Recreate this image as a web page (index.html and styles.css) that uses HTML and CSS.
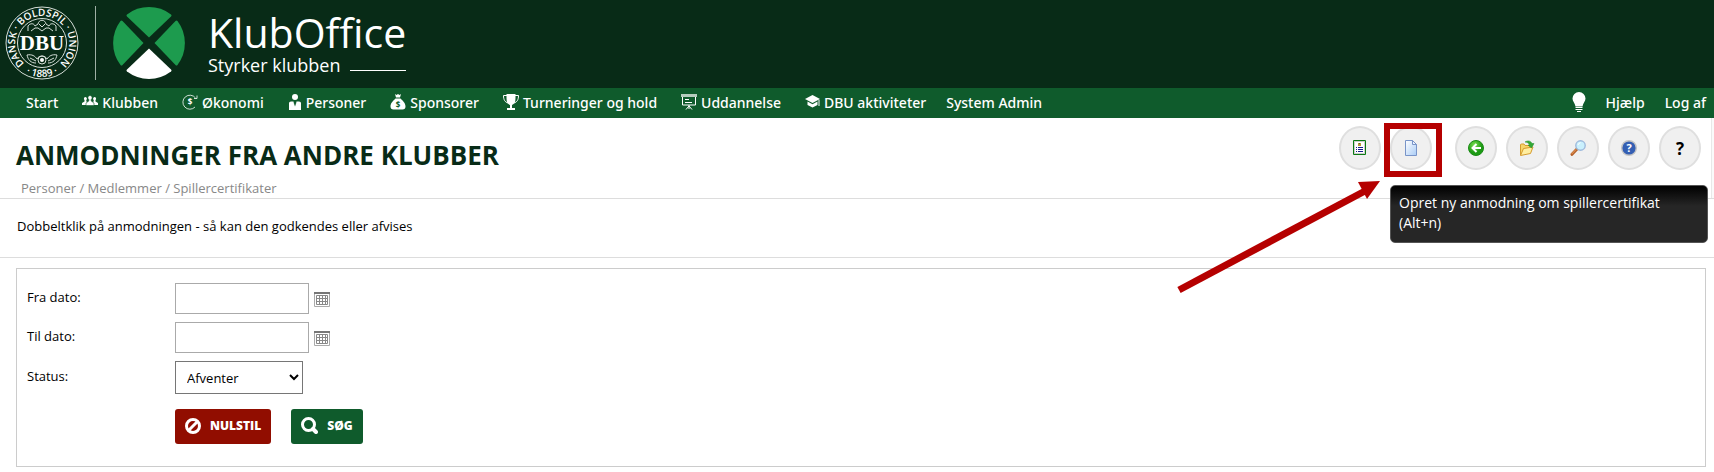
FILE: index.html
```html
<!DOCTYPE html>
<html lang="da">

<head>
  <meta charset="utf-8">
  <meta name="viewport" content="width=device-width, initial-scale=1">
  <title>KlubOffice - Anmodninger fra andre klubber</title>
  <link rel="stylesheet" href="styles.css">
</head>

<body>

<header class="top">
  <svg class="seal" width="74" height="74" viewBox="0 0 74 74" aria-label="DBU">
    <defs>
      <path id="ringTop" d="M37 64A27 27 0 1 1 37.100 64" />
      <path id="ringBottom" d="M3 37A34 34 0 0 0 71 37" />
    </defs>
    <circle cx="37" cy="37" r="36" class="line" />
    <circle cx="37" cy="37" r="24.500" class="line" />
    <text class="ringText"><textPath href="#ringTop" startOffset="50%" text-anchor="middle">DANSK · BOLDSPIL · UNION</textPath></text>
    <text class="ringText"><textPath href="#ringBottom" startOffset="50%" text-anchor="middle">· 1889 ·</textPath></text>
    <path class="line" d="M23 25v-5c2-3 6-3 7 0l3-2c1-5 7-5 8 0l3 2c1-3 5-3 7 0v5M26 25l4-3h3l4 3 4-3h3l4 3M34 18l3 3 3-3" />
    <path class="line" d="M22 49c5-1 8 1 10 4 2-4 8-4 10 0 2-3 5-5 10-4-1 5-4 8-9 8M22 49c1 5 4 8 9 8M25 52l6 3M49 52l-6 3" />
    <circle class="line" cx="37" cy="54" r="4" /><circle cx="37" cy="54" r="2" fill="#fff" />
    <text class="sealText" x="37" y="44" text-anchor="middle">DBU</text>
  </svg>
  <span class="rule"></span>
  <svg class="mark" width="74" height="74" viewBox="0 0 74 74" aria-hidden="true">
    <g fill="#1d9b4e">
      <path d="M37 31.500L15 10.500Q14 9.500 15 8.500A36.500 36.500 0 0 1 59 8.500Q60 9.500 59 10.500Z" />
      <path d="M31.500 37L10.500 59Q9.500 60 8.500 59A36.500 36.500 0 0 1 8.500 15Q9.500 14 10.500 15Z" />
      <path d="M42.500 37L63.500 59Q64.500 60 65.500 59A36.500 36.500 0 0 0 65.500 15Q64.500 14 63.500 15Z" />
    </g>
    <path fill="#fff" d="M37 42.500L15 63.500Q14 64.500 15 65.500A36.500 36.500 0 0 0 59 65.500Q60 64.500 59 63.500Z" />
  </svg>
  <div class="brand">
    <div class="brandName">KlubOffice</div>
    <div class="brandSlogan">Styrker klubben<span></span></div>
  </div>
</header>

<nav class="menu">
  <a href="#">Start</a>
  <a href="#"><svg width="16" height="16" viewBox="0 0 16 16"><path fill="currentColor" d="M3.500 3a1.700 1.700 0 0 1 .8 3v1.500L5.500 8v3H0V9l2.500-1.500V6a1.700 1.700 0 0 1 1-3zM12.500 3a1.700 1.700 0 0 0-.8 3v1.500L10.500 8v3H16V9l-2.500-1.500V6a1.700 1.700 0 0 0-1-3z" /><path fill="currentColor" stroke="#0f5b2c" stroke-width=".6" d="M8 1.500a2.200 2.200 0 0 1 1.200 4V7L12 9v2.500H4V9l2.800-2V5.500A2.200 2.200 0 0 1 8 1.500z" /></svg>Klubben</a>
  <a href="#"><svg width="16" height="16" viewBox="0 0 16 16"><path fill="none" stroke="currentColor" stroke-width=".8" d="M13 13A7 7 0 1 1 13.500 4M15 1.500v3h-3" /><text x="8" y="11" class="dollar">$</text></svg>Økonomi</a>
  <a href="#"><svg width="14" height="16" viewBox="0 0 14 16"><circle cx="7" cy="3" r="3" fill="currentColor" /><path fill="currentColor" d="M1 9q0-1.500 2-1.500h2.500l1 5L7 9l.5 3.500 1-5H11q2 0 2 1.500v7H1z" /></svg>Personer</a>
  <a href="#"><svg width="16" height="16" viewBox="0 0 16 16"><path fill="currentColor" d="M5 0l1.500 1L8 0l1.500 1L11 0l-1 3.500H6zM5.500 4.500h5C13 7 15.500 9 15.500 12.500q0 3-3 3h-9q-3 0-3-3C.5 9 3 7 5.500 4.500z" /><text x="8" y="13.500" class="dollar dark">$</text></svg>Sponsorer</a>
  <a href="#"><svg width="16" height="16" viewBox="0 0 16 16"><path fill="currentColor" d="M3.500 0h9v4c0 4-1 6-3.500 7v3h3v2H4v-2h3v-3C4.500 10 3.500 8 3.500 4z" /><path fill="none" stroke="currentColor" d="M4 1.500H.5C.5 6 2 8 5 9M12 1.500h3.500C15.500 6 14 8 11 9" /></svg>Turneringer og hold</a>
  <a href="#"><svg width="16" height="16" viewBox="0 0 16 16"><path fill="none" stroke="currentColor" d="M1.500 2v9h13V2M8 11v4M8 12l-3 3.500M8 12l3 3.500M4 5.500h4M4 8.500h7" /><path stroke="#b5ccbd" stroke-width="3" d="M0 1.500h16" /></svg>Uddannelse</a>
  <a href="#"><svg width="15" height="16" viewBox="0 0 15 16"><path fill="currentColor" d="M7.500 1l7.500 4-7.500 4L0 5zM2.500 7.500l5 2.700 5-2.700v3.500l-5 2.500-5-2.500zM13.500 6h1v6h-1z" /></svg>DBU aktiviteter</a>
  <a href="#">System Admin</a>
  <a href="#" class="bulb" aria-label="Tips"><svg width="14" height="20" viewBox="0 0 14 20"><path fill="currentColor" d="M7 0a6.500 6.500 0 0 1 6.500 6.500c0 3-2.500 4.500-3 8h-7c-.5-3.500-3-5-3-8A6.500 6.500 0 0 1 7 0z" /><path stroke="currentColor" d="M3.500 15.500h7M3.500 17.500h7M5 19.500h4" /></svg></a>
  <a href="#">Hjælp</a>
  <a href="#">Log af</a>
</nav>

<main>
  <section class="pageHead">
    <div>
      <h1>ANMODNINGER FRA ANDRE KLUBBER</h1>
      <p class="crumbs">Personer / Medlemmer / Spillercertifikater</p>
    </div>
    <div class="tools">
      <button type="button" aria-label="Liste"><svg width="14" height="16" viewBox="0 0 14 16"><path fill="#fff" stroke="#0a7a12" d="M.5.500h12v14H.5z" /><path fill="none" stroke="#9a9a9a" stroke-dasharray="1 1" d="M1.500 1.500h10v12h-10z" /><path stroke="#1a1a8c" d="M3 7.500h1M5 7.500h5M3 9.500h1M5 9.500h5M3 11.500h1M5 11.500h5" /><path fill="#b59a38" d="M5 3h3v3H5z" /><path fill="#554" d="M6 3h1v1H6z" /></svg></button>
      <div class="marked">
        <button type="button" aria-label="Opret ny" aria-describedby="tip"><svg width="12" height="16" viewBox="0 0 12 16"><defs><linearGradient id="sheet" x2="1" y2="1"><stop stop-color="#fff" /><stop offset="1" stop-color="#a9ccf6" /></linearGradient></defs><path fill="url(#sheet)" stroke="#7894c8" d="M.5.500h7l4 4v11H.5z" /><path fill="#e9f2ff" stroke="#7894c8" d="M7.500.500v4h4z" /></svg></button>
        <div class="frame"></div>
        <div class="tooltip" id="tip" role="tooltip">Opret ny anmodning om spillercertifikat (Alt+n)</div>
        <svg class="arrow" width="204" height="114" viewBox="0 0 204 114" aria-hidden="true"><path stroke="#b50000" stroke-width="7" d="M2 110L188 11" /><path fill="#b50000" d="M203 1L181 2L190 19Z" /></svg>
      </div>
      <span class="split"></span>
      <button type="button" aria-label="Tilbage"><svg width="16" height="16" viewBox="0 0 16 16"><defs><radialGradient id="ball" cx=".4" cy=".3"><stop stop-color="#7be04f" /><stop offset="1" stop-color="#1c9a14" /></radialGradient></defs><circle cx="8" cy="8" r="7.500" fill="url(#ball)" stroke="#1b8a16" /><path fill="none" stroke="#fff" stroke-width="2" d="M8.500 4L4.500 8l4 4M5 8h8" /></svg></button>
      <button type="button" aria-label="Åbn"><svg width="16" height="16" viewBox="0 0 16 16"><path fill="#f6d56a" stroke="#d59b2d" d="M1.500 15V5q0-1 1-1H5l1 1.500h5V9" /><path fill="#ffeea0" stroke="#d59b2d" d="M1.500 15.500L4.500 8.500 14 7l-2.500 6.500z" /><path fill="#32a834" stroke="#258a2a" stroke-width=".5" d="M6 2c3-2 6-1 7 1.500h2L12.500 8 9 5h1.700C10 3 8 2.200 6 2z" /></svg></button>
      <button type="button" aria-label="Søg"><svg width="16" height="16" viewBox="0 0 16 16"><path stroke="#b6632c" stroke-width="3" stroke-linecap="round" d="M7 9L2 14.300" /><path stroke="#f0a15c" stroke-linecap="round" d="M6 9.500L2 13.700" /><circle cx="10.500" cy="5.500" r="4.700" fill="#c9f0fd" stroke="#9db9dc" stroke-width="1.400" /><path fill="none" stroke="#fff" d="M8 5q.5-2 2.500-2.300" /></svg></button>
      <button type="button" aria-label="Hjælp"><svg width="16" height="16" viewBox="0 0 16 16"><circle cx="8" cy="8" r="7.300" fill="#345fb3" stroke="#c4c4c4" stroke-width="1.400" /><text class="helpMark" x="8" y="12" text-anchor="middle">?</text></svg></button>
      <button type="button" class="question">?</button>
    </div>
  </section>

  <p class="info">Dobbeltklik på anmodningen - så kan den godkendes eller afvises</p>

  <form class="filter">
    <div class="row">
      <label for="from">Fra dato:</label>
      <input type="text" id="from">
      <svg class="cal" width="16" height="15" viewBox="0 0 16 15" aria-hidden="true"><path fill="#fff" stroke="#aaa" d="M.5.500h15v14H.5z" /><path stroke="#777" stroke-width="2" d="M0 1h16" /><path fill="none" stroke="#888" d="M2.500 3.500h11v9h-11zM2 6.500h12M2 9.500h12M5.500 3v10M8.500 3v10M11.500 3v10" /></svg>
    </div>
    <div class="row">
      <label for="to">Til dato:</label>
      <input type="text" id="to">
      <svg class="cal" width="16" height="15" viewBox="0 0 16 15" aria-hidden="true"><path fill="#fff" stroke="#aaa" d="M.5.500h15v14H.5z" /><path stroke="#777" stroke-width="2" d="M0 1h16" /><path fill="none" stroke="#888" d="M2.500 3.500h11v9h-11zM2 6.500h12M2 9.500h12M5.500 3v10M8.500 3v10M11.500 3v10" /></svg>
    </div>
    <div class="row">
      <label for="status">Status:</label>
      <select id="status">
        <option>Afventer</option>
      </select>
    </div>
    <div class="buttons">
      <button type="reset" class="reset"><svg width="16" height="16" viewBox="0 0 16 16"><circle cx="8" cy="8" r="6.500" fill="none" stroke="#fff" stroke-width="3" /><path stroke="#fff" stroke-width="3" d="M4 12l8-8" /></svg>NULSTIL</button>
      <button type="button" class="search"><svg width="17" height="17" viewBox="0 0 17 17"><circle cx="7.500" cy="7.500" r="6" fill="none" stroke="#fff" stroke-width="3" /><path stroke="#fff" stroke-width="4" stroke-linecap="round" d="M12 12l3 3" /></svg>SØG</button>
    </div>
  </form>
</main>

</body>
</html>
```
FILE: styles.css
```css
* {
  box-sizing: border-box;
}

body {
  margin: 0;
  background: #fff;
  color: #000;
  font-family: "Open Sans", "Noto Sans", sans-serif;
  font-size: 13px;
}

h1, p {
  margin: 0;
}

button, input, select {
  font: inherit;
}

/* logo bar */
.top {
  display: flex;
  align-items: center;
  height: 88px;
  padding: 0 5px 2px;
  background: #082b17;
  color: #fff;
}

.line {
  fill: none;
  stroke: #d5ded8;
}

.ringText {
  fill: #fff;
  font: 600 10px "Open Sans", sans-serif;
}

.sealText {
  fill: #fff;
  font: bold 21px "Liberation Serif", serif;
}

.rule {
  width: 1px;
  height: 74px;
  margin: 0 16px;
  background: #9fb0a5;
}

.brand {
  margin-left: 22px;
}

.brandName {
  font-size: 41px;
  line-height: 44px;
}

.brandSlogan {
  display: flex;
  gap: 10px;
  font-size: 18px;
  line-height: 22px;
}

.brandSlogan span {
  flex: 1;
  height: 17px;
  border-bottom: 1px solid #fff;
}

/* menu */
.menu {
  display: flex;
  align-items: center;
  gap: 20px;
  height: 30px;
  padding: 0 8px 0 26px;
  background: #0f5b2c;
}

.menu a {
  display: flex;
  align-items: center;
  gap: 4px;
  color: #fff;
  font-family: "Noto Sans", sans-serif;
  font-size: 14px;
  font-weight: 500;
  line-height: 20px;
  text-decoration: none;
  white-space: nowrap;
}

.menu a svg {
  margin: 0 0 3px 4px;
}

.menu .bulb {
  margin-left: auto;
}

.dollar {
  fill: currentColor;
  font: bold 8px "Open Sans", sans-serif;
  text-anchor: middle;
}

.dark {
  fill: #0f5b2c;
}

/* page head */
.pageHead {
  display: flex;
  justify-content: space-between;
  height: 81px;
  padding: 0 13px 0 16px;
  border-bottom: 1px solid #ddd;
  box-shadow: inset -2px 0 #fafafa, inset -3px 0 #e8e8e8;
}

h1 {
  padding-top: 18px;
  color: #082b17;
  font-size: 26px;
  line-height: 38px;
}

.crumbs {
  padding-left: 5px;
  color: #888;
  line-height: 28px;
}

.tools {
  display: flex;
  gap: 9px;
  padding-top: 8px;
}

.tools button {
  display: flex;
  align-items: center;
  justify-content: center;
  width: 42px;
  height: 44px;
  padding: 0;
  border: 2px solid #dfdfdf;
  border-radius: 50%;
  background: #f0f0f0;
}

.tools .question {
  color: #000;
  font-size: 17px;
  font-weight: bold;
}

.split {
  width: 1px;
  height: 34px;
  margin: 5px 4px 0 0;
  background: #ddd;
}

.helpMark {
  fill: #fff;
  font: bold 11px "Open Sans", sans-serif;
}

.marked {
  position: relative;
}

.frame {
  position: absolute;
  top: -3px;
  left: -6px;
  width: 58px;
  height: 54px;
  border: 6px solid #b50000;
}

.tooltip {
  position: absolute;
  top: 59px;
  left: 0;
  width: 318px;
  height: 58px;
  padding: 7px 8px 0;
  border: 1px solid #555;
  border-radius: 5px;
  background: linear-gradient(#000, #262626 20px);
  color: #fff;
  font-size: 14px;
  line-height: 20px;
}

.arrow {
  position: absolute;
  top: 54px;
  right: 51px;
}

.info {
  height: 59px;
  padding-left: 17px;
  border-bottom: 1px solid #ddd;
  line-height: 54px;
}

/* filter */
.filter {
  margin: 10px 8px 5px 16px;
  padding: 14px 10px 22px;
  border: 1px solid #ccc;
}

.row {
  display: flex;
  align-items: center;
  margin-bottom: 8px;
}

.row label {
  width: 148px;
  line-height: 28px;
  padding-bottom: 3px;
}

.row input {
  width: 134px;
  height: 31px;
  border: 1px solid #aaa;
}

.row select {
  width: 128px;
  height: 33px;
  padding-left: 7px;
  border: 1px solid #767676;
  border-radius: 0;
  background: #fff;
}

.cal {
  margin: 2px 0 0 5px;
}

.buttons {
  display: flex;
  gap: 20px;
  margin: 15px 0 0 148px;
}

.buttons button {
  display: flex;
  align-items: center;
  gap: 9px;
  height: 35px;
  padding: 0 10px 2px;
  border: 0;
  border-radius: 3px;
  color: #fff;
  font-size: 12px;
  font-weight: 800;
}

.buttons .reset {
  background: #910d00;
}

.buttons .search {
  background: #0f5b2c;
}
```
